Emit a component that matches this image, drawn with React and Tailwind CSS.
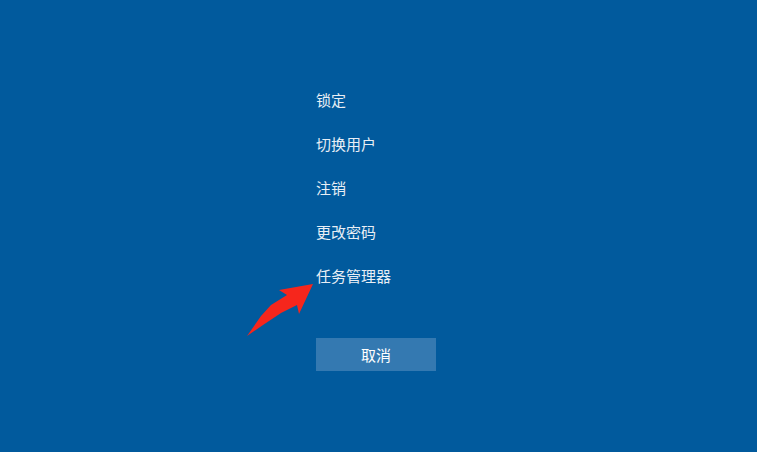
export default function App() {
  const items = ["锁定", "切换用户", "注销", "更改密码", "任务管理器"];

  return (
    <main
      className="relative h-screen w-full overflow-hidden bg-[#015a9d] text-[15px] text-[#e8eef5]"
      style={{ fontFamily: '"Noto Sans CJK SC", "Noto Sans", sans-serif' }}
    >
      <div className="flex flex-col pl-[316px] pt-[77px]">
        <ul className="flex flex-col">
          {items.map((label) => (
            <li key={label} className="h-[44px] flex items-center leading-none">
              {label}
            </li>
          ))}
        </ul>

        <button className="mt-[41px] h-[33px] w-[120px] bg-[#3479b1] text-white text-[15px] leading-none flex items-center justify-center">
          取消
        </button>
      </div>

      {/* annotation arrow */}
      <svg
        className="absolute left-0 top-0 pointer-events-none"
        width="757"
        height="452"
        viewBox="0 0 757 452"
      >
        <path
          d="M247 336 L261 316 L271 305 L287 295 L279 290 L313 284 L299 314 L297 305 L281 313 L263 325 Z"
          fill="#f6261c"
        />
      </svg>
    </main>
  );
}
